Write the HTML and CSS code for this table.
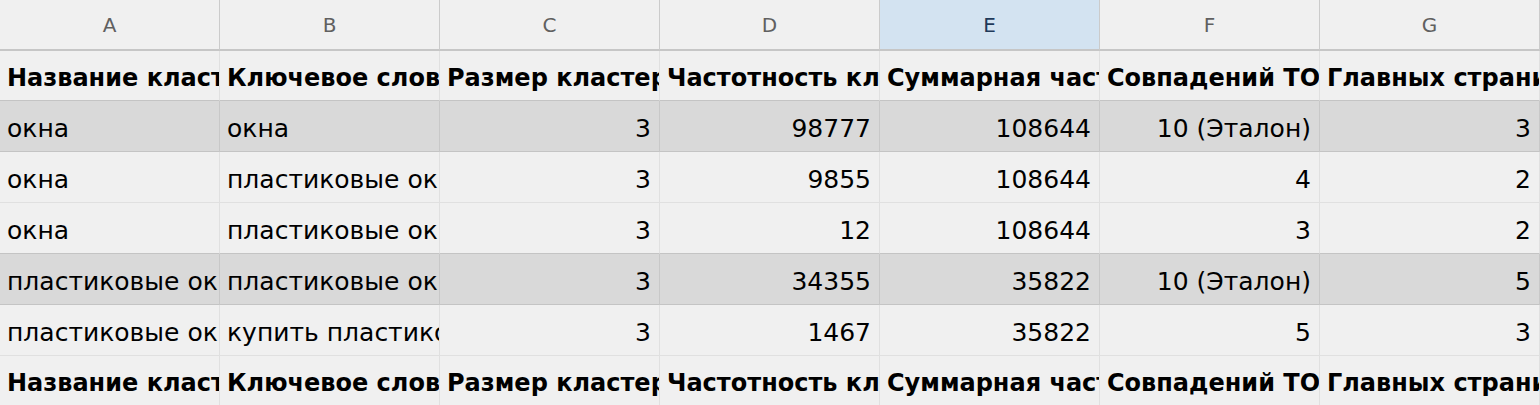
FILE: index.html
```html
<!DOCTYPE html>
<html lang="ru">
<head>
<meta charset="utf-8">
<link rel="stylesheet" href="styles.css">
</head>
<body>
<div class="sheet">
  <div class="row colhead">
    <div class="cell">A</div>
    <div class="cell">B</div>
    <div class="cell">C</div>
    <div class="cell">D</div>
    <div class="cell sel">E</div>
    <div class="cell">F</div>
    <div class="cell">G</div>
    <div class="cell">H</div>
  </div>
  <div class="row hdr pre">
    <div class="cell">Название кластера</div>
    <div class="cell">Ключевое слово</div>
    <div class="cell">Размер кластера</div>
    <div class="cell">Частотность ключа</div>
    <div class="cell">Суммарная частотность</div>
    <div class="cell">Совпадений ТОП</div>
    <div class="cell">Главных страниц</div>
    <div class="cell"></div>
  </div>
  <div class="row grey">
    <div class="cell">окна</div>
    <div class="cell">окна</div>
    <div class="cell num">3</div>
    <div class="cell num">98777</div>
    <div class="cell num">108644</div>
    <div class="cell num">10 (Эталон)</div>
    <div class="cell num">3</div>
    <div class="cell"></div>
  </div>
  <div class="row">
    <div class="cell">окна</div>
    <div class="cell">пластиковые окна</div>
    <div class="cell num">3</div>
    <div class="cell num">9855</div>
    <div class="cell num">108644</div>
    <div class="cell num">4</div>
    <div class="cell num">2</div>
    <div class="cell"></div>
  </div>
  <div class="row pre">
    <div class="cell">окна</div>
    <div class="cell">пластиковые окна цены</div>
    <div class="cell num">3</div>
    <div class="cell num">12</div>
    <div class="cell num">108644</div>
    <div class="cell num">3</div>
    <div class="cell num">2</div>
    <div class="cell"></div>
  </div>
  <div class="row grey">
    <div class="cell">пластиковые окна</div>
    <div class="cell">пластиковые окна</div>
    <div class="cell num">3</div>
    <div class="cell num">34355</div>
    <div class="cell num">35822</div>
    <div class="cell num">10 (Эталон)</div>
    <div class="cell num">5</div>
    <div class="cell"></div>
  </div>
  <div class="row">
    <div class="cell">пластиковые окна</div>
    <div class="cell">купить пластиковые окна</div>
    <div class="cell num">3</div>
    <div class="cell num">1467</div>
    <div class="cell num">35822</div>
    <div class="cell num">5</div>
    <div class="cell num">3</div>
    <div class="cell"></div>
  </div>
  <div class="row hdr">
    <div class="cell">Название кластера</div>
    <div class="cell">Ключевое слово</div>
    <div class="cell">Размер кластера</div>
    <div class="cell">Частотность ключа</div>
    <div class="cell">Суммарная частотность</div>
    <div class="cell">Совпадений ТОП</div>
    <div class="cell">Главных страниц</div>
    <div class="cell"></div>
  </div>
</div>
</body>
</html>
```

FILE: styles.css
```css
html, body {
  margin: 0;
  padding: 0;
  background: #f0f0f0;
  overflow: hidden;
}

.sheet {
  width: 1760px;
  font-family: "DejaVu Sans", Verdana, sans-serif;
  font-size: 25px;
  color: #000;
}

.row {
  display: flex;
  height: 51px;
  box-sizing: border-box;
}

.cell {
  flex: 0 0 220px;
  box-sizing: border-box;
  border-right: 1px solid #e0e0e0;
  border-bottom: 1px solid #e0e0e0;
  padding: 5px 8px 0 7px;
  display: flex;
  align-items: center;
  white-space: nowrap;
  overflow: hidden;
}

.cell.num {
  justify-content: flex-end;
}

.colhead {
  height: 51px;
}

.colhead .cell {
  justify-content: center;
  padding: 0;
  font-size: 20px;
  color: #606060;
  border-right-color: #cbcbcb;
  border-bottom: 2px solid #c6c6c6;
}

.colhead .cell.sel {
  background: #d3e3f1;
  color: #1f3a5a;
}

.hdr {
  height: 50px;
}

.hdr .cell {
  font-weight: bold;
  font-size: 24px;
  padding-top: 4px;
}

.pre .cell {
  border-bottom-color: #c4c4c4;
}

.grey .cell {
  background: #d9d9d9;
  border-right-color: #c8c8c8;
  border-bottom-color: #c4c4c4;
}
```
